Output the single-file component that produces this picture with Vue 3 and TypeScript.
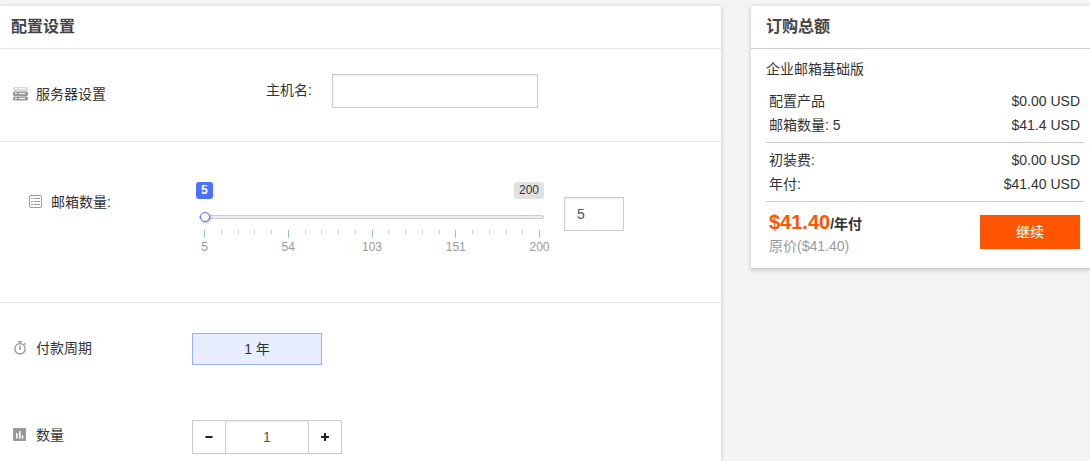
<script setup lang="ts">
import { computed, ref } from 'vue'

interface Line {
  label: string
  amount: string
}

const MIN = 5
const MAX = 200

const hostname = ref<string>('')
const mailboxes = ref<number>(MIN)
const quantity = ref<number>(1)

const ticks = Array.from({ length: 21 }, (_, i) => ({
  major: i % 5 === 0,
  label: i % 5 === 0 ? String(Math.round(MIN + ((MAX - MIN) * i) / 20)) : '',
}))

const items = computed<Line[]>(() => [
  { label: '配置产品', amount: '$0.00 USD' },
  { label: `邮箱数量: ${mailboxes.value}`, amount: '$41.4 USD' },
])

const fees: Line[] = [
  { label: '初装费:', amount: '$0.00 USD' },
  { label: '年付:', amount: '$41.40 USD' },
]

function step(delta: number): void {
  quantity.value = Math.max(1, quantity.value + delta)
}
</script>

<template>
  <div class="page">
    <main class="panel config">
      <h2 class="title">配置设置</h2>

      <section class="row server">
        <div class="name">
          <svg class="icon" viewBox="0 0 15 14">
            <rect x="0" y="0" width="15" height="4" rx="1" fill="#dcdcdc" />
            <rect x="0" y="4.5" width="15" height="4.5" rx="1.5" fill="#999" />
            <rect x="0" y="9.5" width="15" height="4" rx="1.5" fill="#999" />
            <path d="M2 1.5h2M6 1.5h6M2 6.5h2M6 6.5h6M2 11.5h2M6 11.5h6" stroke="#fff" stroke-width="1" />
          </svg>
          <span>服务器设置</span>
        </div>
        <label class="host-label" for="host">主机名:</label>
        <input id="host" v-model="hostname" class="field host" type="text" />
      </section>

      <section class="row mail">
        <label class="name nested" for="mailboxes">
          <svg class="icon" viewBox="0 0 15 14" fill="none" stroke="#999">
            <rect x="1.5" y="0.5" width="12" height="12" rx="1.5" />
            <path d="M3 3.5h2M6 3.5h6M3 6.5h2M6 6.5h6M3 9.5h2M6 9.5h6" />
          </svg>
          <span>邮箱数量:</span>
        </label>
        <div class="slider">
          <div class="bounds">
            <span class="badge current">{{ mailboxes }}</span>
            <span class="badge">{{ MAX }}</span>
          </div>
          <input
            v-model.number="mailboxes"
            class="range"
            type="range"
            :min="MIN"
            :max="MAX"
            aria-label="邮箱数量"
          />
          <div class="scale">
            <span v-for="(t, i) in ticks" :key="i" class="tick" :class="{ major: t.major }">
              <span v-if="t.major" class="tick-label">{{ t.label }}</span>
            </span>
          </div>
        </div>
        <input id="mailboxes" v-model.number="mailboxes" class="field count" type="text" />
      </section>

      <section class="row cycle">
        <div class="name">
          <svg class="icon" viewBox="0 0 15 14" fill="none" stroke="#999">
            <circle cx="7" cy="7.8" r="5.2" stroke-width="1.4" />
            <path d="M5 0.8h4" stroke-width="1.5" />
            <path d="M7 4.5v4.5" stroke-width="1.5" />
            <path d="M11.2 2.2l1.5 1.5" stroke-width="1.3" />
          </svg>
          <span>付款周期</span>
        </div>
        <button class="term" type="button">1 年</button>
      </section>

      <section class="row amount">
        <label class="name" for="quantity">
          <svg class="icon" viewBox="0 0 15 14">
            <rect x="0" y="0" width="13" height="13" rx="1" fill="#999" />
            <path d="M3.8 5v5.5M6.8 3v7.5M9.5 7.5v3" stroke="#fff" stroke-width="1.5" />
          </svg>
          <span>数量</span>
        </label>
        <div class="stepper">
          <button type="button" aria-label="减少" @click="step(-1)">
            <svg width="8" height="8" viewBox="0 0 8 8"><path d="M0.5 4h7" stroke="#222" stroke-width="2" /></svg>
          </button>
          <input id="quantity" v-model.number="quantity" class="field" type="text" />
          <button type="button" aria-label="增加" @click="step(1)">
            <svg width="8" height="8" viewBox="0 0 8 8"><path d="M0 4h8M4 0v8" stroke="#222" stroke-width="2" /></svg>
          </button>
        </div>
      </section>
    </main>

    <aside class="panel summary">
      <h2 class="title">订购总额</h2>
      <div class="body">
        <p class="product">企业邮箱基础版</p>
        <table class="lines">
          <tbody>
            <tr v-for="line in items" :key="line.label">
              <td>{{ line.label }}</td>
              <td class="money">{{ line.amount }}</td>
            </tr>
          </tbody>
        </table>
        <table class="lines fees">
          <tbody>
            <tr v-for="line in fees" :key="line.label">
              <td>{{ line.label }}</td>
              <td class="money">{{ line.amount }}</td>
            </tr>
          </tbody>
        </table>
        <div class="total">
          <div>
            <p class="price"><strong>$41.40</strong><b>/年付</b></p>
            <p class="original">原价($41.40)</p>
          </div>
          <button class="next" type="button">继续</button>
        </div>
      </div>
    </aside>
  </div>
</template>

<style>
body {
  margin: 0;
  background: #f4f4f4;
}
</style>

<style scoped>
.page {
  display: grid;
  grid-template-columns: minmax(0, 1fr) 339px;
  align-items: start;
  gap: 30px;
  padding-top: 6px;
  overflow: hidden;
  color: #333;
  font: 14px/20px 'Liberation Sans', 'Noto Sans CJK SC', sans-serif;
}
.page * {
  box-sizing: border-box;
}
p,
h2 {
  margin: 0;
}
button,
input {
  margin: 0;
  font: inherit;
  color: inherit;
}
button {
  padding: 0;
  cursor: pointer;
}
.panel {
  background: #fff;
  box-shadow: 0 1px 5px rgba(0, 0, 0, 0.2);
}
.title {
  height: 43px;
  padding: 0 11px;
  border-bottom: 1px solid #e6e6e6;
  color: #444;
  font-size: 16px;
  font-weight: 700;
  line-height: 42px;
}
.row {
  display: flex;
  align-items: flex-start;
}
.name {
  display: flex;
  flex: none;
  align-items: center;
  gap: 8px;
  width: 192px;
  padding-left: 13px;
}
.nested {
  padding-left: 28px;
}
.icon {
  flex: none;
  width: 15px;
  height: 14px;
}
.field {
  height: 34px;
  padding: 0 12px;
  border: 1px solid #ccc;
  border-radius: 0;
  outline: 0;
  background: #fff;
  box-shadow: inset 0 1px 1px rgba(0, 0, 0, 0.08);
  color: #555;
}

.server {
  padding: 25px 0 33px;
  border-bottom: 1px solid #e6e6e6;
}
.server .name {
  margin-top: 10px;
}
.host-label {
  width: 140px;
  margin-top: 6px;
  padding-left: 74px;
}
.host {
  width: 206px;
}

.mail {
  padding: 40px 0 47px 0;
  border-bottom: 1px solid #e6e6e6;
}
.mail .name {
  margin-top: 10px;
}
.slider {
  width: 353px;
  padding: 0 0 0 4px;
}
.bounds {
  display: flex;
  justify-content: space-between;
  padding-right: 1px;
}
.badge {
  height: 17px;
  padding: 0 5px;
  border-radius: 3px;
  background: #e1e1e1;
  font-size: 12px;
  line-height: 17px;
}
.current {
  background: #4a72ff;
  color: #fff;
  font-weight: 700;
}
.range {
  display: block;
  width: 345px;
  height: 12px;
  margin: 12px 0 0 3px;
  appearance: none;
  background: transparent;
}
.range::-webkit-slider-runnable-track {
  height: 4px;
  border: 1px solid #ccc;
  border-radius: 2px;
  background: #eee;
}
.range::-webkit-slider-thumb {
  width: 10px;
  height: 10px;
  margin-top: -4px;
  appearance: none;
  border: 1px solid #4a72ff;
  border-radius: 50%;
  background: #fff;
  box-shadow: 1px 1px 3px rgba(0, 0, 0, 0.3);
}
.scale {
  display: flex;
  justify-content: space-between;
  width: 336px;
  height: 25px;
  margin: 7px 0 0 8px;
}
.tick {
  display: flex;
  justify-content: center;
  width: 1px;
  height: 4px;
  background: #ccc;
}
.major {
  height: 8px;
  background: #9dbfdd;
}
.tick-label {
  flex: none;
  margin-top: 9px;
  color: #999;
  font-size: 12px;
  line-height: 16px;
}
.count {
  width: 60px;
  margin: 15px 0 0 19px;
}

.cycle {
  padding-top: 30px;
}
.cycle .name,
.amount .name {
  margin-top: 5px;
}
.term {
  width: 130px;
  height: 32px;
  border: 1px solid #99aff6;
  background: #e8eefd;
}
.amount {
  padding: 55px 0 7px;
}
.stepper {
  display: flex;
  width: 150px;
}
.stepper button {
  display: flex;
  flex: none;
  align-items: center;
  justify-content: center;
  width: 34px;
  height: 34px;
  border: 1px solid #ccc;
  background: #fff;
}
.stepper .field {
  flex: 1;
  min-width: 0;
  border-width: 1px 0;
  text-align: center;
}

.summary {
  border-bottom: 1px solid #ccc;
}
.summary .title {
  padding: 0 15px;
  border-color: #ccc;
}
.body {
  padding: 10px 6px 12px 15px;
}
.product {
  margin-bottom: 10px;
}
.lines {
  width: 100%;
  border-bottom: 1px solid #ccc;
  border-spacing: 0;
}
.lines td {
  height: 24px;
  padding: 0 4px 0 3px;
}
.lines.fees {
  padding: 5px 0;
}
.lines:not(.fees) {
  padding-bottom: 5px;
}
.money {
  text-align: right;
}
.total {
  display: flex;
  justify-content: space-between;
  padding: 8px 4px 0 3px;
}
.price {
  line-height: 24px;
}
.price strong {
  color: #ff5500;
  font-size: 20px;
}
.original {
  color: #999;
}
.next {
  width: 100px;
  height: 34px;
  margin-top: 5px;
  border: 0;
  background: #ff5500;
  color: #fff;
}
</style>
